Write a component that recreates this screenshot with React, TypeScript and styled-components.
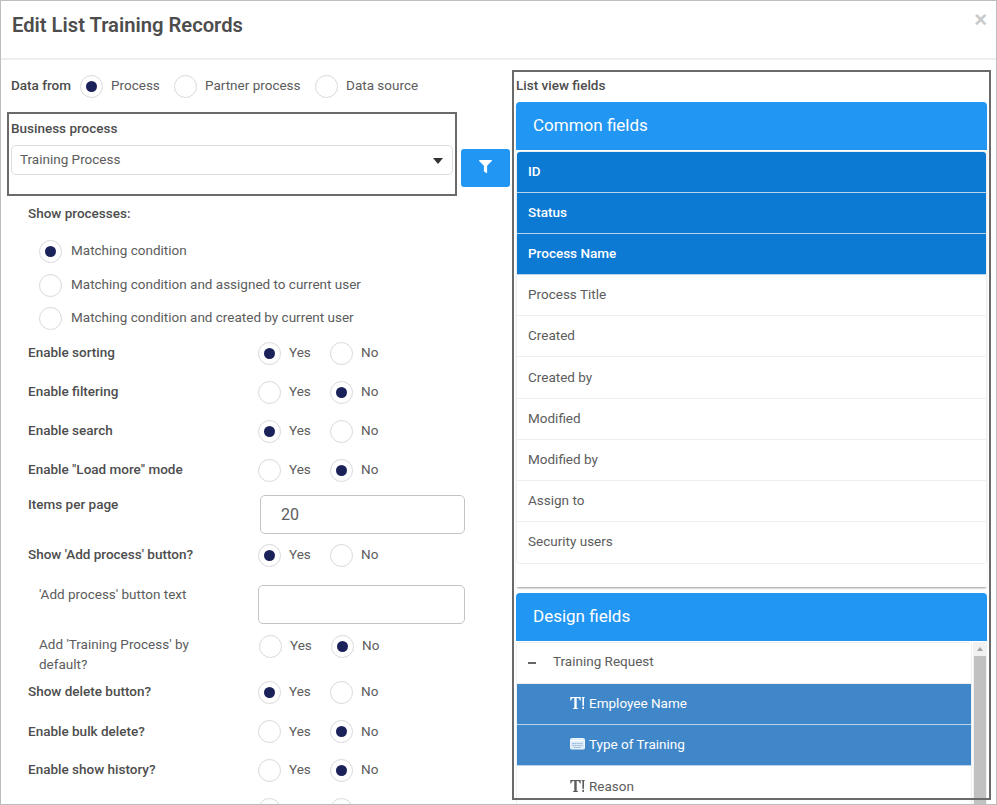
import React from "react";
import styled, { createGlobalStyle } from "styled-components";
import { FaFilter } from "react-icons/fa";

const Global = createGlobalStyle`
  html, body { margin: 0; padding: 0; background: #fff; }
  body { font-family: Roboto, "Liberation Sans", sans-serif; font-size: 13.5px; color: #5c5c5c; }
  * { box-sizing: border-box; }
`;

const Dialog = styled.div`
  width: 997px;
  height: 805px;
  border: 1px solid #bdbdbd;
  overflow: hidden;
  background: #fff;
  display: flex;
  flex-direction: column;
`;
const Header = styled.header`
  height: 59px;
  flex: none;
  border-bottom: 2px solid #eee;
  padding: 11px 9px 0 11px;
  display: flex;
  justify-content: space-between;
  align-items: flex-start;
`;
const Title = styled.h1`
  margin: 0;
  font-size: 20.2px;
  line-height: 26px;
  font-weight: 600;
  color: #4d4d4d;
`;
const Close = styled.span`
  font-family: "Liberation Sans", sans-serif;
  font-size: 22px;
  font-weight: 700;
  line-height: 15px;
  color: #c9c9c9;
`;
const Body = styled.div`
  flex: 1;
  min-height: 0;
  display: flex;
`;
const Left = styled.div`
  width: 511px;
  flex: none;
  overflow: hidden;
`;
const DataFrom = styled.div`
  --lift: -3px;
  display: flex;
  align-items: center;
  height: 23px;
  margin: 15px 0 14px 10px;
`;
const DataLabel = styled.span`
  font-weight: 500;
  color: #4d4d4d;
  margin-right: 9px;
  margin-top: var(--lift);
`;
const BusinessRow = styled.div`
  display: flex;
  align-items: flex-start;
  margin-left: 6px;
`;
const BusinessBox = styled.div`
  width: 450px;
  height: 84px;
  border: 2px solid #6a6a6a;
  padding: 4px 2px 0 2px;
`;
const BoxLabel = styled.div`
  font-weight: 500;
  color: #4d4d4d;
  line-height: 20px;
  margin-bottom: 7px;
`;
const Select = styled.div`
  height: 30px;
  border: 1px solid #ddd;
  border-radius: 5px;
  padding: 0 9px 3px 8px;
  display: flex;
  align-items: center;
  justify-content: space-between;
`;
const Caret = styled.span`
  width: 0;
  height: 0;
  margin-top: 5px;
  border-left: 5px solid transparent;
  border-right: 5px solid transparent;
  border-top: 6px solid #333;
`;
const FilterButton = styled.button`
  width: 49px;
  height: 38px;
  margin: 37px 0 0 4px;
  border: 0;
  border-radius: 3px;
  background: #2196f3;
  color: #fff;
  display: flex;
  align-items: center;
  justify-content: center;
  padding: 0 0 3px;
`;
const ShowLabel = styled.div`
  height: 34px;
  margin-left: 27px;
  font-weight: 500;
  color: #4d4d4d;
  display: flex;
  align-items: center;
`;
const Options = styled.div`
  padding: 4px 0 0 38px;
`;
const Option = styled.div<{ $h: number }>`
  height: ${(p) => p.$h}px;
  display: flex;
  align-items: center;
`;
const OptionText = styled.span`
  margin-left: 9px;
  margin-top: -2px;
`;
const Row = styled.div<{ $h: number; $top?: number; $lift?: boolean }>`
  --lift: ${(p) => (p.$lift ? "-3px" : "-2px")};
  height: ${(p) => p.$h}px;
  display: flex;
  align-items: ${(p) => (p.$top !== undefined ? "flex-start" : "center")};
  padding: ${(p) => p.$top ?? 0}px 0 0 27px;
`;
const FieldLabel = styled.span<{ $sub?: boolean }>`
  width: 230px;
  flex: none;
  margin-top: var(--lift);
  line-height: 20px;
  font-weight: ${(p) => (p.$sub ? 400 : 500)};
  color: ${(p) => (p.$sub ? "#5c5c5c" : "#4d4d4d")};
  padding: ${(p) => (p.$sub ? "0 50px 0 11px" : "0")};
`;
const TopLabel = styled(FieldLabel)`
  margin-top: -1px;
`;
const Radios = styled.div<{ $shift?: number }>`
  display: flex;
  align-items: center;
  margin-left: ${(p) => p.$shift ?? 0}px;
`;
const RadioCircle = styled.span<{ $on?: boolean }>`
  width: 23px;
  height: 23px;
  flex: none;
  border-radius: 50%;
  border: 1px solid #d9d9d9;
  background: #fff;
  display: inline-flex;
  align-items: center;
  justify-content: center;
  &::after {
    content: "";
    width: 11px;
    height: 11px;
    border-radius: 50%;
    background: ${(p) => (p.$on ? "#1b2159" : "transparent")};
  }
`;
const RadioText = styled.span<{ $w: number }>`
  width: ${(p) => p.$w}px;
  padding-left: 8px;
  margin-top: var(--lift);
  white-space: nowrap;
`;
const Input = styled.div<{ $w: number; $shift?: number }>`
  width: ${(p) => p.$w}px;
  margin-left: ${(p) => p.$shift ?? 0}px;
  height: 39px;
  border: 1px solid #c4c4c4;
  border-radius: 5px;
  font-size: 16px;
  padding-left: 20px;
  display: flex;
  align-items: center;
`;
const Right = styled.div`
  position: relative;
  flex: 1;
  min-width: 0;
  padding: 15px 9px 0 4px;
  overflow: hidden;
`;
const Annotation = styled.div`
  position: absolute;
  left: 0;
  top: 10px;
  width: 479px;
  height: 730px;
  border: 2px solid #6a6a6a;
  pointer-events: none;
  z-index: 2;
`;
const FieldsTitle = styled.div`
  font-weight: 500;
  color: #4d4d4d;
  line-height: 20px;
  margin-bottom: 7px;
`;
const PanelHeader = styled.div`
  height: 48px;
  background: #2196f3;
  border-radius: 4px 4px 0 0;
  color: #fff;
  font-size: 17px;
  display: flex;
  align-items: center;
  padding: 0 0 3px 17px;
`;
const CommonPanel = styled.div`
  height: 485px;
  box-shadow: 0 2px 2px -1px rgba(0, 0, 0, 0.4);
  margin-bottom: 6px;
`;
const ListBox = styled.div`
  margin: 1px 0 0;
  border: 1px solid #eee;
  border-radius: 4px;
  overflow: hidden;
`;
const ListRow = styled.div<{ $on?: boolean; $indent?: number; $color?: string }>`
  height: 41.1px;
  display: flex;
  align-items: center;
  padding: 0 0 2px ${(p) => p.$indent ?? 11}px;
  background: ${(p) => (p.$on ? p.$color ?? "#0c79d3" : "#fff")};
  color: ${(p) => (p.$on ? "#fff" : "#5c5c5c")};
  font-weight: ${(p) => (p.$on && !p.$color ? 500 : 400)};
  border-bottom: 1px solid ${(p) => (p.$on ? "#b9d3ea" : "#eee")};
  &:last-child { border-bottom: 0; }
`;
const TreeHead = styled(ListRow)`
  padding-bottom: 4px;
`;
const DesignBody = styled.div`
  display: flex;
  height: 170px;
  padding-top: 1px;
`;
const TreeBox = styled.div`
  width: 456px;
  flex: none;
  border: 1px solid #eee;
  border-bottom: 0;
  border-radius: 4px 4px 0 0;
  overflow: hidden;
`;
const Minus = styled.span`
  width: 8px;
  height: 2px;
  background: #666;
  margin-right: 17px;
  margin-top: 3px;
`;
const Scrollbar = styled.div`
  width: 14px;
  margin-left: 1px;
  background: #f1f1f1;
  display: flex;
  flex-direction: column;
  align-items: center;
`;
const ScrollArrow = styled.span`
  width: 0;
  height: 0;
  margin: 5px 0 5px;
  border-left: 3.5px solid transparent;
  border-right: 3.5px solid transparent;
  border-bottom: 4px solid #a3a3a3;
`;
const ScrollThumb = styled.div`
  width: 12px;
  flex: 1;
  background: #c1c1c1;
`;
const FieldIcon = styled.svg`
  width: 15px;
  height: 14px;
  flex: none;
  margin-right: 4px;
`;

const TextIcon = () => (
  <FieldIcon viewBox="0 0 15 14" fill="currentColor" aria-hidden>
    <path d="M.3 1h10.400v3.600h-.9C9.500 3 9 2.100 7.600 2.100H6.700v9.200c0 .7.300 1 1.400 1V13H2.900v-.7c1.100 0 1.400-.3 1.400-1V2.100h-.9C2 2.100 1.500 3 1.200 4.600H.3z" />
    <path d="M11.700 1h3v1h-.7v7.800h-1.600V2h-.7zM12.400 10.800H14V13h-1.600z" />
  </FieldIcon>
);
const KeyboardIcon = () => (
  <FieldIcon viewBox="0 0 15 14" aria-hidden>
    <rect x="0.500" y="1.500" width="14" height="10.500" rx="1" fill="#dbe9f6" stroke="#eef5fb" />
    <rect x="1.500" y="2.800" width="12" height="1.500" fill="#fff" />
    <path d="M2.500 6.500h10M2.500 8.500h10M4 10.500h7" stroke="#8fb5da" strokeWidth="1" strokeDasharray="1.500 .7" />
  </FieldIcon>
);

const YesNo = ({ yes, shift }: { yes: boolean; shift?: number }) => (
  <Radios $shift={shift}>
    <RadioCircle $on={yes} />
    <RadioText $w={49}>Yes</RadioText>
    <RadioCircle $on={!yes} />
    <RadioText $w={30}>No</RadioText>
  </Radios>
);

const common = ["ID", "Status", "Process Name", "Process Title", "Created", "Created by", "Modified", "Modified by", "Assign to", "Security users"];

export default function App() {
  return (
    <>
      <Global />
      <Dialog>
        <Header>
          <Title>Edit List Training Records</Title>
          <Close>×</Close>
        </Header>
        <Body>
          <Left>
            <DataFrom>
              <DataLabel>Data from</DataLabel>
              <RadioCircle $on />
              <RadioText $w={71}>Process</RadioText>
              <RadioCircle />
              <RadioText $w={118}>Partner process</RadioText>
              <RadioCircle />
              <RadioText $w={100}>Data source</RadioText>
            </DataFrom>
            <BusinessRow>
              <BusinessBox>
                <BoxLabel>Business process</BoxLabel>
                <Select>
                  Training Process
                  <Caret />
                </Select>
              </BusinessBox>
              <FilterButton aria-label="Filter">
                <FaFilter size={13} />
              </FilterButton>
            </BusinessRow>
            <ShowLabel>Show processes:</ShowLabel>
            <Options>
              <Option $h={34}><RadioCircle $on /><OptionText>Matching condition</OptionText></Option>
              <Option $h={34}><RadioCircle /><OptionText>Matching condition and assigned to current user</OptionText></Option>
              <Option $h={32}><RadioCircle /><OptionText>Matching condition and created by current user</OptionText></Option>
            </Options>
            <Row $h={39} $lift><FieldLabel>Enable sorting</FieldLabel><YesNo yes /></Row>
            <Row $h={39} $lift><FieldLabel>Enable filtering</FieldLabel><YesNo yes={false} /></Row>
            <Row $h={39} $lift><FieldLabel>Enable search</FieldLabel><YesNo yes /></Row>
            <Row $h={39} $lift><FieldLabel>Enable "Load more" mode</FieldLabel><YesNo yes={false} /></Row>
            <Row $h={46} $top={5}>
              <TopLabel>Items per page</TopLabel>
              <Input $w={205} $shift={2}>20</Input>
            </Row>
            <Row $h={38}><FieldLabel>Show 'Add process' button?</FieldLabel><YesNo yes /></Row>
            <Row $h={54} $top={11}>
              <TopLabel $sub>'Add process' button text</TopLabel>
              <Input $w={207} />
            </Row>
            <Row $h={44} $top={7} $lift>
              <TopLabel $sub>Add 'Training Process' by default?</TopLabel>
              <YesNo yes={false} shift={1} />
            </Row>
            <Row $h={40}><FieldLabel>Show delete button?</FieldLabel><YesNo yes /></Row>
            <Row $h={39}><FieldLabel>Enable bulk delete?</FieldLabel><YesNo yes={false} /></Row>
            <Row $h={39} $lift><FieldLabel>Enable show history?</FieldLabel><YesNo yes={false} /></Row>
            <Row $h={39}>
              <FieldLabel />
              <Radios>
                <RadioCircle />
                <RadioText $w={49} />
                <RadioCircle />
              </Radios>
            </Row>
          </Left>
          <Right>
            <Annotation />
            <FieldsTitle>List view fields</FieldsTitle>
            <CommonPanel>
              <PanelHeader>Common fields</PanelHeader>
              <ListBox>
                {common.map((c, i) => (
                  <ListRow key={c} $on={i < 3}>{c}</ListRow>
                ))}
              </ListBox>
            </CommonPanel>
            <PanelHeader>Design fields</PanelHeader>
            <DesignBody>
              <TreeBox>
                <TreeHead $indent={11}><Minus />Training Request</TreeHead>
                <ListRow $on $color="#3f87c8" $indent={53}><TextIcon />Employee Name</ListRow>
                <ListRow $on $color="#3f87c8" $indent={53}><KeyboardIcon />Type of Training</ListRow>
                <ListRow $indent={53}><TextIcon />Reason</ListRow>
              </TreeBox>
              <Scrollbar>
                <ScrollArrow />
                <ScrollThumb />
              </Scrollbar>
            </DesignBody>
          </Right>
        </Body>
      </Dialog>
    </>
  );
}
